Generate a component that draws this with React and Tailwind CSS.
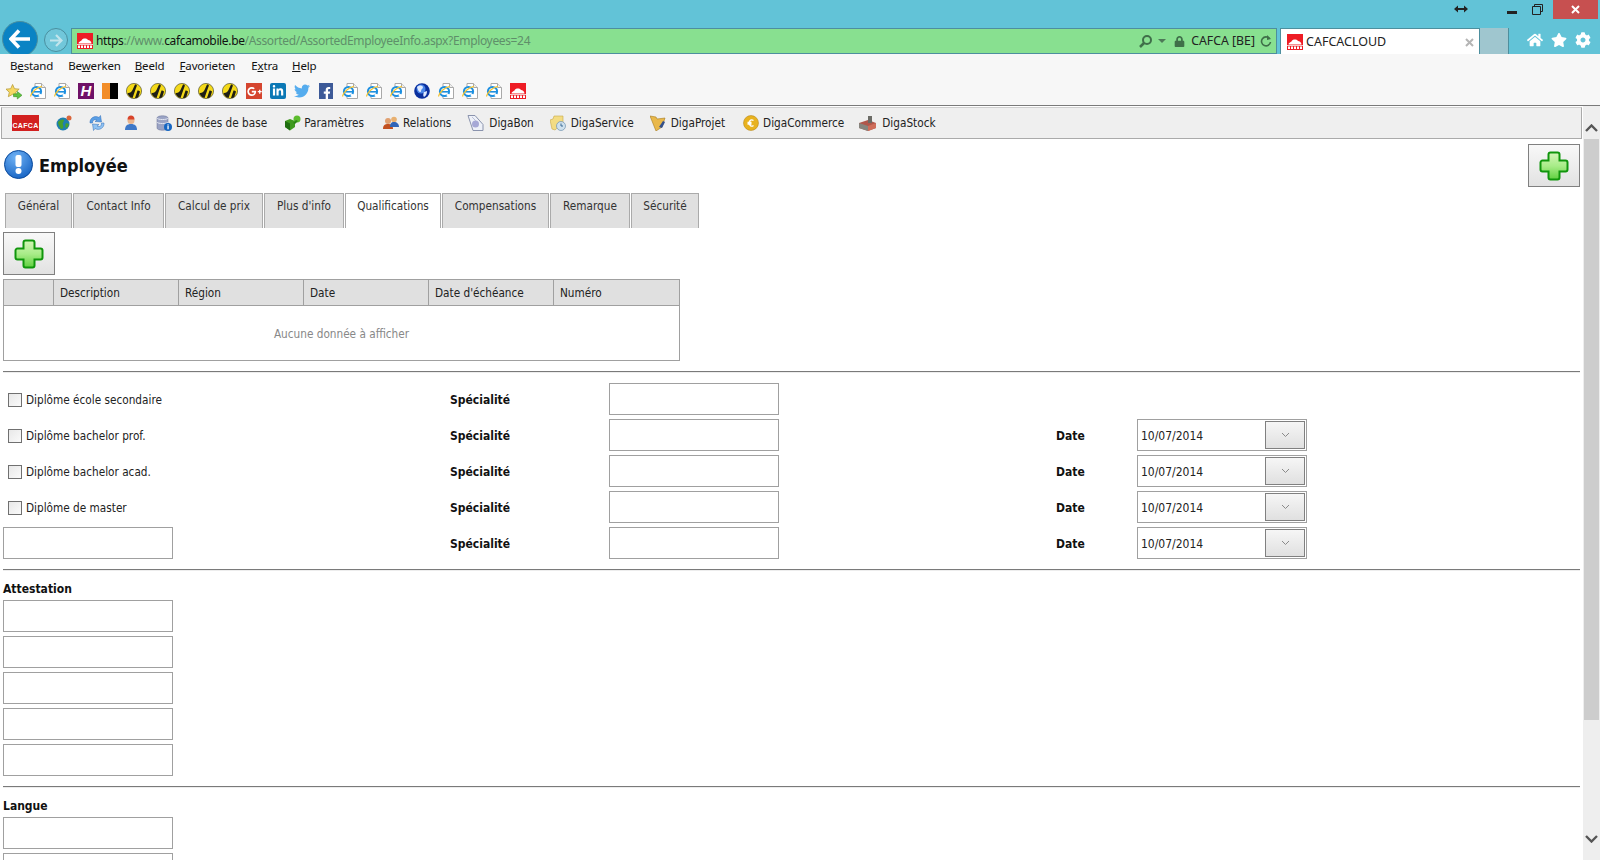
import { FaTwitter, FaFacebookF, FaLinkedinIn, FaGooglePlusG, FaHome, FaStar, FaCog, FaLock } from "react-icons/fa";

const pageFont = "font-['DejaVu_Sans_Condensed','DejaVu_Sans',sans-serif]";
const uiFont = "font-['Noto_Sans','Open_Sans',sans-serif]";

// small drawn icons
function IePage() {
  return (
    <svg width="16" height="16" viewBox="0 0 16 16">
      <path d="M5 .5h6.500l4 4v11H5z" fill="#fff" stroke="#a9a9a9" />
      <path d="M11.500 .5v4h4" fill="#eee" stroke="#a9a9a9" />
      <circle cx="6.500" cy="8.500" r="4.600" fill="#fff" stroke="#1c8fe0" strokeWidth="2" />
      <path d="M2.500 8.800h8.500" stroke="#1c8fe0" strokeWidth="1.600" />
      <path d="M9 11.500l3 1.500" stroke="#fff" strokeWidth="2.500" />
      <path d="M.5 13.500C1 10 6 4.500 12 3.400" fill="none" stroke="#f2c230" strokeWidth="1.200" />
    </svg>
  );
}

function YellowBall() {
  return (
    <svg width="16" height="16" viewBox="0 0 16 16">
      <circle cx="8" cy="8" r="7.600" fill="#f4d91a" stroke="#3a3a1a" strokeWidth=".6" />
      <path d="M1.500 10c2 .5 4-1 5-3l2.500-5.500c2.500 0 2 1.500 1 3.500L6.500 15C3.500 14.500 2 12 1.500 10z" fill="#1e1e14" />
      <path d="M11.500 7.500L9 15c1.500 0 3-.5 3.500-1.500L14 8.500c-1-1-1.500-1-2.500-1z" fill="#1e1e14" />
    </svg>
  );
}

function CloudLogo() {
  return (
    <svg width="16" height="16" viewBox="0 0 16 16">
      <rect width="16" height="16" fill="#ee1c25" />
      <path d="M1.500 10.500c0-2 2-2 3-3 1-2.500 5-2.500 6.500-.5 1.500 0 3.500 1.500 3.500 3.500z" fill="#fff" />
      <rect y="11" width="16" height="1" fill="#f8c8c8" />
      <path d="M1 12.500h2v2.500H1zM4 12.500h2v2.500H4zM7 12.500h2v2.500H7zM10 12.500h2v2.500h-2zM13 12.500h2v2.500h-2z" fill="#fff" />
    </svg>
  );
}

function FavStar() {
  return (
    <svg width="17" height="17" viewBox="0 0 17 17">
      <path d="M7 1l2 4.500 5 .5-3.700 3.300L11.500 14 7 11.500 2.500 14l1-4.700L0 6l5-.5z" fill="#f6d862" stroke="#b59a35" strokeWidth=".8" />
      <path d="M8 11h4V8.500l5 4-5 4V14H8z" fill="#5fc23f" stroke="#3a8f26" strokeWidth=".6" />
    </svg>
  );
}

function Globe() {
  return (
    <svg width="16" height="16" viewBox="0 0 16 16">
      <circle cx="8" cy="8" r="7.800" fill="#0a2f9e" />
      <circle cx="7" cy="6" r="4.500" fill="#4b86e8" />
      <path d="M3 4c2-2 5-2 6 0 0 2-2 2-2 4S5 9 4 7zM10 9l3-1c0 3-1 5-3 6-1-1-1-3 0-5z" fill="#dfeaff" />
    </svg>
  );
}

function CafcaLogo() {
  return (
    <div className="w-[27px] h-4 bg-[#d2201f] flex flex-col items-center justify-end text-white font-['Liberation_Sans',sans-serif] font-bold text-[7px] leading-[9px] tracking-[0.3px] pb-px">
      CAFCA
    </div>
  );
}

function NetGlobe() {
  return (
    <svg width="16" height="16" viewBox="0 0 16 16">
      <circle cx="7" cy="9" r="6.500" fill="#1f7fb0" />
      <path d="M2 7c2-2 4-3 6-2 0 2-2 3-1 5s0 4-2 4c-1-2-3-4-3-7zM10 8l3 1c-1 3-2 4-3 4-1-2-1-3 0-5z" fill="#47a02f" />
      <circle cx="13" cy="3" r="2.500" fill="#d9653b" />
    </svg>
  );
}

function SyncIcon() {
  return (
    <svg width="16" height="16" viewBox="0 0 16 16">
      <path d="M1 8c-.5-5 5-8 9-5.500l1.500-2 1 6.500-6.500-.5 2-1.500C5 4 3.500 5.500 3.500 8z" fill="#5a9fe6" stroke="#2f6db8" strokeWidth=".5" />
      <path d="M15 8c.5 5-5 8-9 5.500l-1.500 2-1-6.500 6.500.5-2 1.500c3 1.500 4.500 0 4.500-3z" fill="#8fc2f2" stroke="#2f6db8" strokeWidth=".5" />
    </svg>
  );
}

function PersonIcon() {
  return (
    <svg width="16" height="16" viewBox="0 0 16 16">
      <path d="M2 15c0-4 2-6 6-6s6 2 6 6z" fill="#3e78c8" />
      <circle cx="8" cy="5.500" r="3.500" fill="#eab48c" />
      <path d="M4.500 4.500C4.500 2 6 .5 8 .5s3.500 1.500 3.500 4z" fill="#d8432a" />
    </svg>
  );
}

function DbIcon() {
  return (
    <svg width="16" height="16" viewBox="0 0 16 16">
      <path d="M1 3c0-3 11-3 11 0v10c0 3-11 3-11 0z" fill="#9aa3c4" stroke="#6b7396" strokeWidth=".5" />
      <path d="M1 3c0 2 11 2 11 0M1 7c0 2 11 2 11 0" fill="none" stroke="#e4e7f2" />
      <circle cx="12" cy="12" r="4" fill="#1666c2" />
      <rect x="11.400" y="11" width="1.300" height="3.300" fill="#fff" />
      <rect x="11.400" y="9.400" width="1.300" height="1.200" fill="#fff" />
    </svg>
  );
}

function ParamIcon() {
  return (
    <svg width="17" height="16" viewBox="0 0 17 16">
      <path d="M1 6l5-2 5 2v6l-5 3.500L1 12z" fill="#3f9a1e" />
      <path d="M1 6l5 2.500V15.500L1 12z" fill="#1f6d10" />
      <circle cx="13" cy="4" r="3.500" fill="#5cbc2e" />
      <path d="M9 8l3-3 2 1-3 3z" fill="#2d8516" />
    </svg>
  );
}

function RelIcon() {
  return (
    <svg width="16" height="16" viewBox="0 0 16 16">
      <circle cx="5" cy="6" r="3" fill="#e0a070" />
      <path d="M0 14c0-4 2-5 5-5s5 1 5 5z" fill="#c2501f" />
      <circle cx="11" cy="4.500" r="2.800" fill="#e8b070" />
      <path d="M7 12c0-3 1-5 4-5s5 2 5 5z" fill="#2f64b8" />
    </svg>
  );
}

function BonIcon() {
  return (
    <svg width="17" height="16" viewBox="0 0 17 16">
      <path d="M1 .5h7l8 9v6H6z" fill="#eef1f8" stroke="#8a93ad" />
      <circle cx="8.500" cy="9" r="3.500" fill="#a6a8d6" />
      <path d="M5 2l4 4" stroke="#b9bfd8" />
    </svg>
  );
}

function ServiceIcon() {
  return (
    <svg width="16" height="16" viewBox="0 0 16 16">
      <path d="M0 5l3-1 1-3 9 0v7l-8 7-3-1z" fill="#f3dc83" stroke="#c7a748" strokeWidth=".6" />
      <circle cx="11" cy="11" r="4.500" fill="#cfe1ee" stroke="#6e90ad" strokeWidth=".7" />
      <path d="M11 8.500V11h2" fill="none" stroke="#3b6a94" />
    </svg>
  );
}

function ProjetIcon() {
  return (
    <svg width="16" height="16" viewBox="0 0 16 16">
      <path d="M0 1l6 1 1 2 8-1-3 9-6 4z" fill="#e9b84a" stroke="#a67a1e" strokeWidth=".6" />
      <path d="M9 12l4-6 2 1-3 6z" fill="#33508c" />
    </svg>
  );
}

function CoinIcon() {
  return (
    <svg width="16" height="16" viewBox="0 0 16 16">
      <circle cx="8" cy="8" r="7.500" fill="#e8b21f" stroke="#b07f10" strokeWidth=".5" />
      <path d="M10.500 5.500c-2-1.500-4-.5-4.500 2.500.5 3 2.500 4 4.500 2.500M4.500 7.500h4M4.500 9h4" fill="none" stroke="#fff" strokeWidth="1.300" />
    </svg>
  );
}

function StockIcon() {
  return (
    <svg width="17" height="16" viewBox="0 0 17 16">
      <path d="M0 8l9-3 8 3v5l-8 3-9-3z" fill="#b0574b" />
      <path d="M0 8l9 3v5l-9-3z" fill="#86857e" />
      <path d="M9 11l8-3v5l-8 3z" fill="#cf6d5a" />
      <rect x="9" y="1" width="4" height="7" fill="#6b6b66" />
    </svg>
  );
}

function PlusIcon() {
  return (
    <svg width="30" height="30" viewBox="0 0 30 30">
      <defs>
        <linearGradient id="plusFill" x1="0" y1="0" x2="0" y2="1">
          <stop offset="0" stopColor="#d4f5b8" />
          <stop offset="0.5" stopColor="#a8ec88" />
          <stop offset="1" stopColor="#5fd03f" />
        </linearGradient>
      </defs>
      <path
        d="M11.500 1.500h7a2 2 0 0 1 2 2v6h6a2 2 0 0 1 2 2v7a2 2 0 0 1-2 2h-6v6a2 2 0 0 1-2 2h-7a2 2 0 0 1-2-2v-6h-6a2 2 0 0 1-2-2v-7a2 2 0 0 1 2-2h6v-6a2 2 0 0 1 2-2z"
        fill="url(#plusFill)"
        stroke="#10960c"
        strokeWidth="2"
      />
    </svg>
  );
}

function InfoBadge() {
  return (
    <svg width="30" height="30" viewBox="0 0 30 30">
      <defs>
        <radialGradient id="badgeFill" cx="0.4" cy="0.25" r="0.9">
          <stop offset="0" stopColor="#6fb2f5" />
          <stop offset="1" stopColor="#0a58bc" />
        </radialGradient>
      </defs>
      <circle cx="14.500" cy="14.500" r="14" fill="url(#badgeFill)" stroke="#0b4a9c" />
      <rect x="11.500" y="5" width="6" height="12" rx="2" fill="#fff" />
      <circle cx="14.500" cy="21" r="3" fill="#fff" />
    </svg>
  );
}

function AddButton() {
  return (
    <button className="w-[52px] h-[43px] border border-[#808080] bg-gradient-to-b from-[#f8f8f8] to-[#e2e2e2] flex items-center justify-center">
      <PlusIcon />
    </button>
  );
}

function TextBox() {
  return <div className="w-[170px] h-[32px] border border-[#a0a0a0] bg-white" />;
}

function DateBox() {
  return (
    <div className="w-[170px] h-[32px] border border-[#a0a0a0] bg-white flex items-center justify-between pl-[3px] pr-px text-[12px] text-[#222]">
      <span className="pt-px">10/07/2014</span>
      <div className="w-[40px] h-[28px] border border-[#808080] bg-gradient-to-b from-[#f6f6f6] to-[#e0e0e0] flex items-center justify-center">
        <svg width="9" height="6" viewBox="0 0 9 6">
          <path d="M1 1l3.500 3.500L8 1" fill="none" stroke="#8a8a8a" />
        </svg>
      </div>
    </div>
  );
}

function Divider() {
  return <div className="h-[2px] border-t border-[#7a7a7a] bg-[#ededed]" />;
}

const favIcons = [
  <IePage />, <IePage />,
  <div className="w-4 h-4 bg-[#6f1167] text-white font-['Liberation_Sans',sans-serif] italic font-bold text-[15px] leading-4 text-center">H</div>,
  <div className="w-4 h-4 flex"><div className="w-[8px] bg-[#f28d28]" /><div className="w-[8px] bg-black" /></div>,
  <YellowBall />, <YellowBall />, <YellowBall />, <YellowBall />, <YellowBall />,
  <div className="w-4 h-4 bg-[#d5452f] text-white flex items-center justify-center"><FaGooglePlusG size={15} /></div>,
  <div className="w-4 h-4 rounded-[2px] bg-[#0b78b5] text-white flex items-center justify-center"><FaLinkedinIn size={12} /></div>,
  <div className="w-4 h-4 text-[#55acee] flex items-center justify-center"><FaTwitter size={16} /></div>,
  <div className="w-4 h-4 flex justify-center"><div className="w-[14px] h-4 bg-[#3d5a98] text-white flex items-end justify-end"><FaFacebookF size={12} /></div></div>,
  <IePage />, <IePage />, <IePage />,
  <Globe />,
  <IePage />, <IePage />, <IePage />,
  <CloudLogo />,
];

const tabs = [
  { label: "Général", w: "w-[67px]" },
  { label: "Contact Info", w: "w-[91px]" },
  { label: "Calcul de prix", w: "w-[98px]" },
  { label: "Plus d'info", w: "w-[80px]" },
  { label: "Qualifications", w: "w-[96px]", active: true },
  { label: "Compensations", w: "w-[107px]" },
  { label: "Remarque", w: "w-[80px]" },
  { label: "Sécurité", w: "w-[68px]" },
];

const degrees = ["Diplôme école secondaire", "Diplôme bachelor prof.", "Diplôme bachelor acad.", "Diplôme de master", null];

function Section({ title, count }) {
  return (
    <div>
      <div className="h-[29px] flex items-center font-bold text-[12px] text-[#111] pt-[7px]">{title}</div>
      <div className="flex flex-col gap-1">
        {Array.from({ length: count }).map((_, i) => (
          <TextBox key={i} />
        ))}
      </div>
    </div>
  );
}

export default function App() {
  return (
    <div className={`w-[1600px] h-[860px] overflow-hidden bg-white flex flex-col ${pageFont}`}>
      {/* browser chrome */}
      <div className={`h-[54px] shrink-0 bg-[#62c3d7] overflow-hidden flex flex-col ${uiFont}`}>
        <div className="h-[28px] flex items-start justify-end pr-[2px]">
          <svg width="14" height="8" viewBox="0 0 14 8" className="mt-[5px] mr-[39px]">
            <path d="M0 4l4-3.500V3h6V.5L14 4l-4 3.500V5H4v2.500z" fill="#222" />
          </svg>
          <div className="w-[10px] h-[3px] bg-[#222] mt-[11px] mr-[15px]" />
          <svg width="11" height="11" viewBox="0 0 11 11" className="mt-[4px] mr-[10px]">
            <path d="M2.500 2.500v-2h8v7h-2M.5 2.500h8v8h-8z" fill="none" stroke="#222" />
          </svg>
          <div className="w-[45px] h-[19px] bg-[#c75050] flex items-center justify-center text-white">
            <svg width="9" height="9" viewBox="0 0 9 9">
              <path d="M1 1l7 7M8 1l-7 7" stroke="#fff" strokeWidth="2" />
            </svg>
          </div>
        </div>
        <div className="h-[26px] flex items-start">
          <div className="w-[36px] h-[36px] ml-[2px] -mt-[7px] rounded-full bg-[#0a83c4] border border-[#4a8f9f] flex items-center justify-center shrink-0">
            <svg width="22" height="20" viewBox="0 0 22 20">
              <path d="M10 1.500L2 10l8 8.500M2.500 10H21" fill="none" stroke="#fff" strokeWidth="3.600" />
            </svg>
          </div>
          <div className="w-[24px] h-[24px] ml-[6px] rounded-full border border-[#4a8f9f] bg-[#71c7da] flex items-center justify-center shrink-0">
            <svg width="14" height="13" viewBox="0 0 14 13">
              <path d="M7 1l5.500 5.500L7 12M12 6.500H1" fill="none" stroke="#c2e5ec" strokeWidth="2.200" />
            </svg>
          </div>
          <div className="w-[1206px] h-[26px] ml-[3px] bg-[#88e090] border border-[#4d8f9e] flex items-center pl-[5px] shrink-0">
            <CloudLogo />
            <span className="ml-[3px] text-[12px] tracking-[-0.35px] whitespace-nowrap text-[#5f8f6a]">
              <span className="text-[#111]">https</span>://www.<span className="text-[#111]">cafcamobile.be</span>/Assorted/AssortedEmployeeInfo.aspx?Employees=24
            </span>
            <div className="ml-auto flex items-center text-[#111]">
              <svg width="15" height="15" viewBox="0 0 15 15">
                <circle cx="9" cy="6" r="4" fill="none" stroke="#3f6f49" strokeWidth="2" />
                <path d="M6 9l-4 4" stroke="#3f6f49" strokeWidth="2.500" />
              </svg>
              <svg width="8" height="4" viewBox="0 0 8 4" className="ml-[5px]">
                <path d="M0 0h8L4 4z" fill="#4d7a57" />
              </svg>
              <FaLock size={11} color="#3f6f49" className="ml-[8px]" />
              <span className="ml-[6px] text-[12.300px] whitespace-nowrap text-[#222]">CAFCA [BE]</span>
              <svg width="12" height="12" viewBox="0 0 12 12" className="ml-[5px] mr-[4px]">
                <path d="M9.500 3.500A4.500 4.500 0 1 0 10.500 7" fill="none" stroke="#3f6f49" strokeWidth="1.600" />
                <path d="M7 0v5l4-1z" fill="#3f6f49" />
              </svg>
            </div>
          </div>
          <div className="w-[200px] h-[27px] ml-[3px] bg-white border-x border-t border-[#4d8f9e] flex items-center pl-[6px] pr-[5px] shrink-0">
            <CloudLogo />
            <span className="ml-[3px] text-[12.500px] text-[#222]">CAFCACLOUD</span>
            <svg width="9" height="9" viewBox="0 0 9 9" className="ml-auto">
              <path d="M1 1l7 7M8 1l-7 7" stroke="#b5b5b5" strokeWidth="2" />
            </svg>
          </div>
          <div className="w-[29px] h-[27px] bg-[#9fc6cf] border-r border-[#4d8f9e] shrink-0" />
          <div className="flex items-center gap-[8px] ml-[18px] h-[24px] text-white">
            <FaHome size={16} />
            <FaStar size={16} />
            <FaCog size={16} />
          </div>
        </div>
      </div>

      {/* menu and favorites */}
      <div className="h-[51px] shrink-0 bg-[#f7f7f7] flex flex-col">
        <div className={`h-[24px] flex items-center text-[11.500px] tracking-[-0.15px] text-[#111] ${uiFont}`}>
          <span className="ml-[10px]">B<u>e</u>stand</span>
          <span className="ml-[15px]">Be<u>w</u>erken</span>
          <span className="ml-[14px]"><u>B</u>eeld</span>
          <span className="ml-[15px]"><u>F</u>avorieten</span>
          <span className="ml-[16px]">E<u>x</u>tra</span>
          <span className="ml-[14px]"><u>H</u>elp</span>
        </div>
        <div className="flex items-center gap-2 pl-[6px] mt-[5px]">
          <div className="w-4 h-4 flex items-center"><FavStar /></div>
          {favIcons.map((icon, i) => (
            <div key={i} className="w-4 h-4">{icon}</div>
          ))}
        </div>
      </div>

      <div className="flex-1 min-h-0 flex flex-col border-t border-[#7a7a7a]">
        <div className="flex-1 min-h-0 flex">
          <div className="w-[1583px] shrink-0">
            {/* app toolbar */}
            <div className="h-[32px] mt-px ml-px w-[1581px] bg-[#efefef] border border-[#aaaaaa] border-t-[#d0d0d0] flex items-center pl-[10px] text-[11.700px] text-[#222]">
              <CafcaLogo />
              <div className="ml-[17px]"><NetGlobe /></div>
              <div className="ml-[17px]"><SyncIcon /></div>
              <div className="ml-[18px]"><PersonIcon /></div>
              <div className="ml-[17px] flex items-center gap-[4px]"><DbIcon /><span className="pt-[2px]">Données de base</span></div>
              <div className="ml-[17px] flex items-center gap-[3px]"><ParamIcon /><span className="pt-[2px]">Paramètres</span></div>
              <div className="ml-[19px] flex items-center gap-[4px]"><RelIcon /><span className="pt-[2px]">Relations</span></div>
              <div className="ml-[16px] flex items-center gap-[5px]"><BonIcon /><span className="pt-[2px]">DigaBon</span></div>
              <div className="ml-[16px] flex items-center gap-[5px]"><ServiceIcon /><span className="pt-[2px]">DigaService</span></div>
              <div className="ml-[16px] flex items-center gap-[5px]"><ProjetIcon /><span className="pt-[2px]">DigaProjet</span></div>
              <div className="ml-[18px] flex items-center gap-[4px]"><CoinIcon /><span className="pt-[2px]">DigaCommerce</span></div>
              <div className="ml-[15px] flex items-center gap-[6px]"><StockIcon /><span className="pt-[2px]">DigaStock</span></div>
            </div>

            <div className="pl-[3px] pr-[3px] text-[11.700px]">
              {/* title */}
              <div className="h-[54px] flex items-start justify-between">
                <div className="flex items-center mt-[11px] ml-px">
                  <InfoBadge />
                  <span className="ml-[5px] text-[18px] font-bold text-[#111]">Employée</span>
                </div>
                <div className="mt-[5px]"><AddButton /></div>
              </div>

              {/* tabs */}
              <div className="flex gap-px ml-[2px]">
                {tabs.map((tab) => (
                  <div
                    key={tab.label}
                    className={`${tab.w} h-[35px] border-x border-t border-[#aaaaaa] text-center pt-[4px] text-[#333] ${tab.active ? "bg-white" : "bg-[#e0e0e0]"}`}
                  >
                    {tab.label}
                  </div>
                ))}
              </div>

              <div className="mt-[4px]"><AddButton /></div>

              {/* table */}
              <div className="mt-[4px] w-[677px] h-[82px] border border-[#a0a0a0] flex flex-col">
                <div className="h-[26px] shrink-0 bg-[#e0e0e0] border-b border-[#a0a0a0] grid grid-cols-[50px_125px_125px_125px_125px_1fr] text-[#222]">
                  {["", "Description", "Région", "Date", "Date d'échéance", "Numéro"].map((h, i) => (
                    <div key={i} className={`flex items-center pl-[6px] pt-[2px] ${i < 5 ? "border-r border-[#a0a0a0]" : ""}`}>{h}</div>
                  ))}
                </div>
                <div className="flex-1 flex items-center justify-center pt-[3px] text-[#888888]">Aucune donnée à afficher</div>
              </div>

              <div className="mt-[10px]"><Divider /></div>

              {/* degrees */}
              <div className="mt-[10px] grid grid-cols-[447px_159px_170px_277px_81px_170px] auto-rows-[32px] gap-y-1 items-center text-[#222]">
                {degrees.map((d, i) => (
                  <div key={i} className="contents">
                    {d ? (
                      <div className="flex items-center pl-[5px] pt-[3px]">
                        <div className="w-[14px] h-[14px] border border-[#707070] bg-gradient-to-br from-[#e8e8e8] to-[#fafafa]" />
                        <span className="ml-[4px]">{d}</span>
                      </div>
                    ) : (
                      <TextBox />
                    )}
                    <div className="font-bold text-[12px] text-[#111] pt-px">Spécialité</div>
                    <TextBox />
                    <div />
                    {i > 0 ? <div className="font-bold text-[12px] text-[#111] pt-px">Date</div> : <div />}
                    {i > 0 ? <DateBox /> : <div />}
                  </div>
                ))}
              </div>

              <div className="mt-[10px]"><Divider /></div>
              <Section title="Attestation" count={5} />
              <div className="mt-[10px]"><Divider /></div>
              <Section title="Langue" count={2} />
            </div>
          </div>

          {/* scrollbar */}
          <div className="w-[17px] shrink-0 bg-[#eeeeee] flex flex-col items-center">
            <div className="h-[33px] flex items-center justify-center pt-[10px]">
              <svg width="13" height="8" viewBox="0 0 13 8">
                <path d="M1 7l5.500-5.500L12 7" fill="none" stroke="#555" strokeWidth="2.400" />
              </svg>
            </div>
            <div className="w-[15px] h-[581px] bg-[#cdcdcd]" />
            <div className="mt-auto h-[28px] flex items-start justify-center pt-[3px]">
              <svg width="13" height="8" viewBox="0 0 13 8">
                <path d="M1 1l5.500 5.500L12 1" fill="none" stroke="#555" strokeWidth="2.400" />
              </svg>
            </div>
          </div>
        </div>
      </div>
    </div>
  );
}
